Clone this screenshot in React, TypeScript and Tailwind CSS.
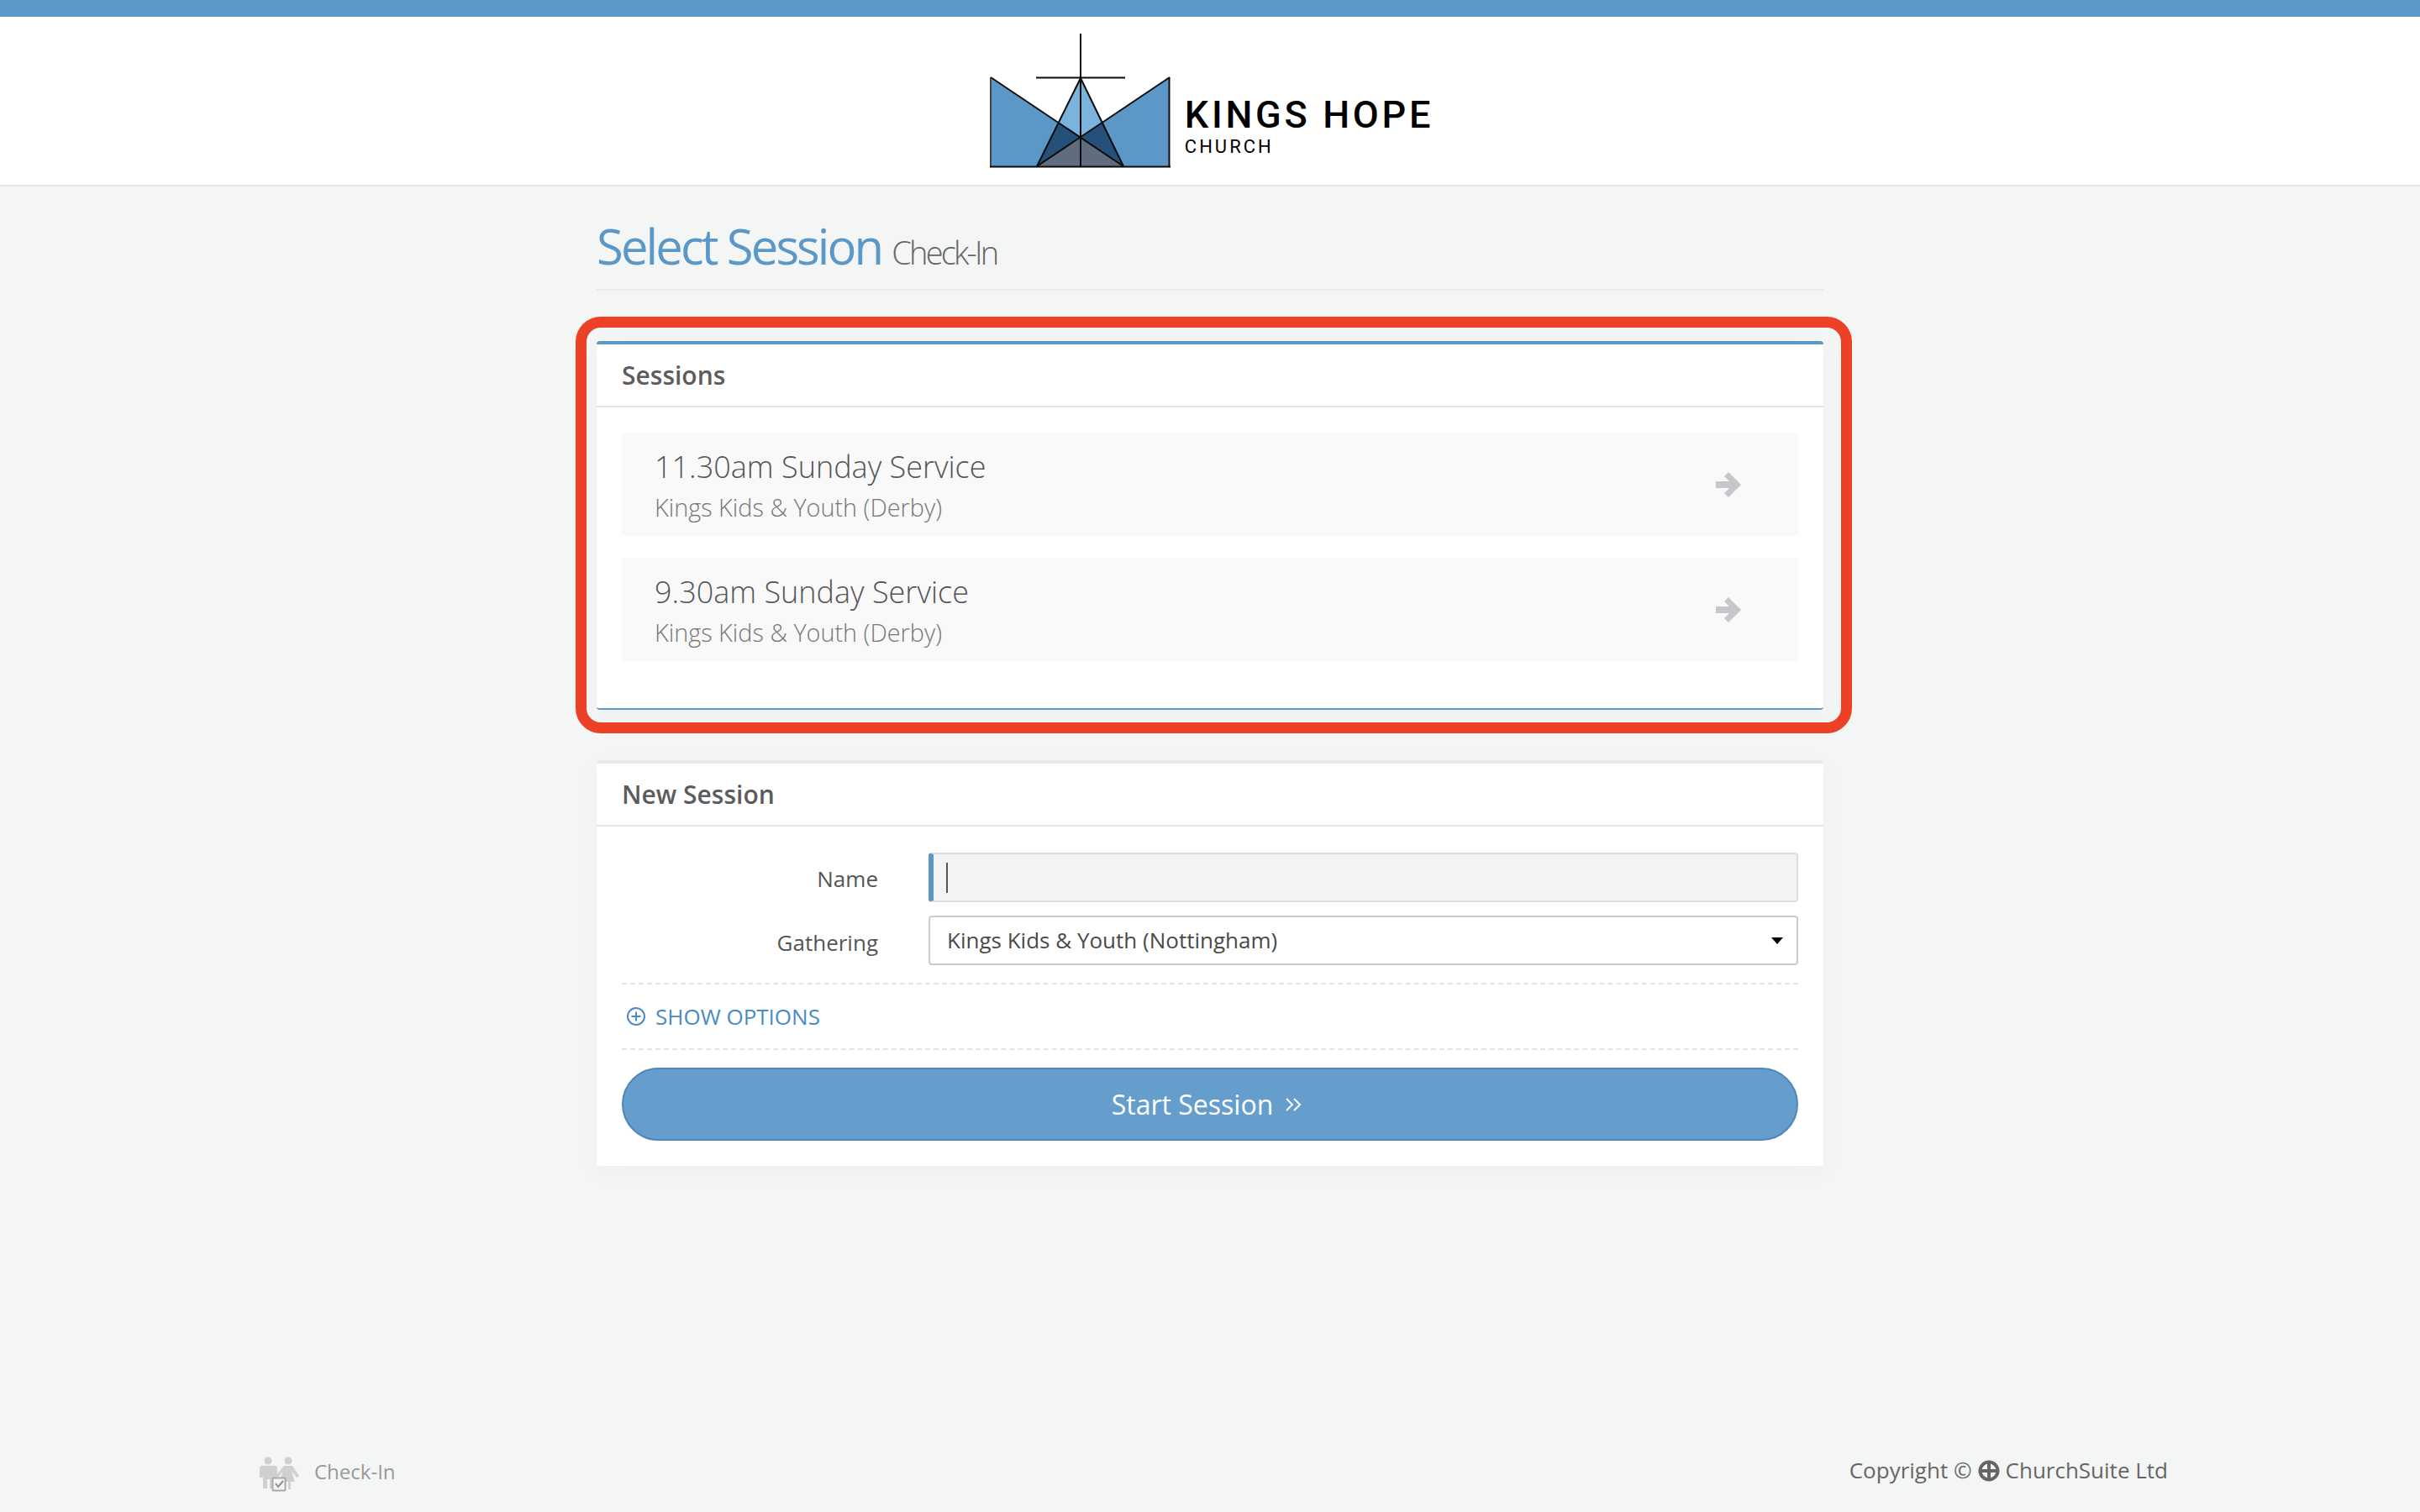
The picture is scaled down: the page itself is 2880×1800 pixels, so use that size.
import React from "react";

const font = { fontFamily: '"Open Sans", "Liberation Sans", sans-serif' };

function Logo() {
  return (
    <svg width="216" height="162" viewBox="1177 39 216 162" className="block">
      <polygon points="1178,92 1258,146 1233,198 1178,198" fill="#5b97c7" />
      <polygon points="1391,92 1311,146 1336,198 1391,198" fill="#5b97c7" />
      <polygon points="1285,93 1311,146 1285,164 1258,146" fill="#7ab3dc" />
      <polygon points="1258,146 1285,164 1233,198" fill="#24507a" />
      <polygon points="1311,146 1285,164 1336,198" fill="#24507a" />
      <polygon points="1285,164 1336,198 1233,198" fill="#5f6d7e" />
      <g stroke="#0b0b0b" strokeWidth="2" fill="none">
        <line x1="1285" y1="40" x2="1285" y2="199" />
        <line x1="1232" y1="92.5" x2="1338" y2="92.5" />
        <line x1="1285" y1="93" x2="1233" y2="198" />
        <line x1="1285" y1="93" x2="1336" y2="198" />
        <line x1="1178" y1="92" x2="1336" y2="198" />
        <line x1="1391" y1="92" x2="1233" y2="198" />
        <line x1="1178" y1="92" x2="1178" y2="199" stroke="#444" />
        <line x1="1390.5" y1="92" x2="1390.5" y2="199" />
        <line x1="1177" y1="198.5" x2="1392" y2="198.5" />
      </g>
    </svg>
  );
}

function Arrow() {
  return (
    <svg width="30" height="30" viewBox="0 0 30 30" className="block shrink-0" fill="#c7c7cb">
      <polygon points="15,0 30,15 15,30 10,25 16,19 0,19 0,11 16,11 10,5" />
    </svg>
  );
}

function SessionRow({ title }: { title: string }) {
  return (
    <div className="flex h-[123px] items-center justify-between bg-[#f9f9f9] pl-[39px] pr-[68px]">
      <div>
        <div className="mt-[2px] text-[36px] leading-[50px] font-light text-[#555]">{title}</div>
        <div className="mt-[3px] text-[28.8px] leading-[40px] font-light text-[#777]">Kings Kids &amp; Youth (Derby)</div>
      </div>
      <Arrow />
    </div>
  );
}

function FieldLabel({ children, offset }: { children: React.ReactNode; offset: string }) {
  return <div className={`w-[305px] text-right text-[26px] text-[#555] ${offset}`}>{children}</div>;
}

function PeopleIcon() {
  return (
    <svg width="48" height="42" viewBox="0 0 48 42" className="block">
      <g fill="#d0d0d0">
        <circle cx="11" cy="5" r="4.5" />
        <path d="M3 11h16a3 3 0 0 1 3 3v11h-4v13h-5V27h-3v11H5V25H1V14a3 3 0 0 1 2-3z" />
        <circle cx="35" cy="5" r="4.5" />
        <path d="M30 11h10l8 12-3 2-6-8 4 13h-5v9h-3v-9h-3v9h-3v-9h-5l5-13-6 8-3-2z" />
      </g>
      <rect x="16.5" y="25.5" width="15" height="15" fill="#f4f6f5" stroke="#a8a8a8" strokeWidth="2" rx="1" />
      <path d="M20 32l3 4 6-7" fill="none" stroke="#8e8e8e" strokeWidth="2" />
    </svg>
  );
}

function CrossIcon() {
  return (
    <svg width="26" height="26" viewBox="0 0 26 26" className="block">
      <circle cx="13" cy="13" r="10.5" fill="none" stroke="#666" strokeWidth="4" />
      <path d="M13 2v22M2 13h22" stroke="#666" strokeWidth="4" />
    </svg>
  );
}

export default function App() {
  return (
    <div style={font} className="flex h-[1800px] flex-col bg-[#f4f6f5]">
      <header className="h-[222px] shrink-0 border-t-[20px] border-b-2 border-t-[#5b97c7] border-b-[#e6e6e6] bg-white">
        <div className="flex h-[200px] items-start justify-center pl-[4px]">
          <div className="mt-[19px]"><Logo /></div>
          <div className="ml-[16px] mt-[91px] text-black" style={{ fontFamily: '"Roboto", sans-serif' }}>
            <div className="text-[45px] leading-[52px] font-medium tracking-[3.7px] whitespace-nowrap">KINGS HOPE</div>
            <div className="-mt-[1px] text-[22px] leading-[26px] tracking-[3px]">CHURCH</div>
          </div>
        </div>
      </header>

      <main className="mx-auto w-[1460px] flex-1">
        <div className="flex h-[124px] items-start border-b-2 border-[#e9eaea] pt-[34px]">
          <h1 className="text-[58px] leading-[74px] font-normal tracking-[-2.9px] text-[#5b97c7]">Select Session</h1>
          <span className="ml-[12px] mt-[18px] text-[38px] leading-[52px] font-light tracking-[-2.8px] text-[#666]">Check-In</span>
        </div>

        <section className="relative mt-[60px]">
          <div className="pointer-events-none absolute -left-[25px] -right-[34px] -top-[29px] -bottom-[28px] rounded-[30px] border-[13px] border-[#ec4126]" />
          <div className="rounded-[4px] border-t-4 border-b-2 border-[#5b97c7] bg-white shadow-[0_6px_30px_rgba(0,0,0,0.035)]">
            <div className="flex h-[75px] items-center border-b-2 border-[#e6e6e6] px-[30px] text-[30px] font-semibold text-[#5c5c5c]">Sessions</div>
            <div className="flex flex-col gap-[26px] px-[30px] pt-[30px] pb-[56px]">
              <SessionRow title="11.30am Sunday Service" />
              <SessionRow title="9.30am Sunday Service" />
            </div>
          </div>
        </section>

        <section className="mt-[60px] rounded-[4px] border-t-4 border-[#e8eaea] bg-white shadow-[0_6px_30px_rgba(0,0,0,0.035)]">
          <div className="flex h-[75px] items-center border-b-2 border-[#e6e6e6] px-[30px] text-[30px] font-semibold text-[#5c5c5c]">New Session</div>
          <div className="px-[30px] pt-[31px] pb-[30px]">
            <div className="flex items-center">
              <FieldLabel offset="pt-[4px]">Name</FieldLabel>
              <div className="ml-[60px] flex h-[59px] flex-1 items-center rounded-[4px] border-2 border-l-[6px] border-[#dddddd] border-l-[#5b97c7] bg-[#f2f3f5] pl-[15px]">
                <div className="h-[36px] w-[2px] bg-[#555]" />
              </div>
            </div>
            <div className="mt-[16px] flex items-center">
              <FieldLabel offset="pt-[6px]">Gathering</FieldLabel>
              <div className="ml-[60px] flex h-[59px] flex-1 items-center justify-between rounded-[4px] border-2 border-[#cccccc] bg-white pr-[16px] pl-[20px] text-[26px] text-[#4a4a4a]">
                <span>Kings Kids &amp; Youth (Nottingham)</span>
                <svg width="14" height="8" viewBox="0 0 14 8" className="block"><polygon points="0,0 14,0 7,8" fill="#000" /></svg>
              </div>
            </div>
            <div className="mt-[21px] flex h-[80px] items-center border-y-2 border-dashed border-[#e4e4e4] pl-[5px] text-[26px] text-[#4a8bc2]">
              <svg width="24" height="24" viewBox="0 0 24 24" className="block" fill="none" stroke="#4a8bc2" strokeWidth="2">
                <circle cx="12" cy="12" r="10" />
                <path d="M12 6.5v11M6.5 12h11" />
              </svg>
              <span className="ml-[11px]">SHOW OPTIONS</span>
            </div>
            <div className="mt-[21px] flex h-[87px] items-center justify-center rounded-full border-2 border-[#4f86bb] bg-[#659ecd] pr-[8px] text-[32px] text-white">
              <span>Start Session</span>
              <svg width="20" height="20" viewBox="0 0 20 20" className="ml-[14px] block" fill="none" stroke="#fff" strokeWidth="2">
                <path d="M2 3l7 7-7 7M11 3l7 7-7 7" />
              </svg>
            </div>
          </div>
        </section>
      </main>

      <footer className="mx-auto flex h-[90px] w-[2280px] shrink-0 items-start justify-between pl-[8px] pt-[18px]">
        <div className="flex items-center text-[24px] text-[#999]">
          <div className="mt-[6px]"><PeopleIcon /></div>
          <span className="ml-[18px]">Check-In</span>
        </div>
        <div className="mt-[3px] flex items-center text-[26px] text-[#666]">
          <span>Copyright ©</span>
          <span className="mx-[7px]"><CrossIcon /></span>
          <span>ChurchSuite Ltd</span>
        </div>
      </footer>
    </div>
  );
}
